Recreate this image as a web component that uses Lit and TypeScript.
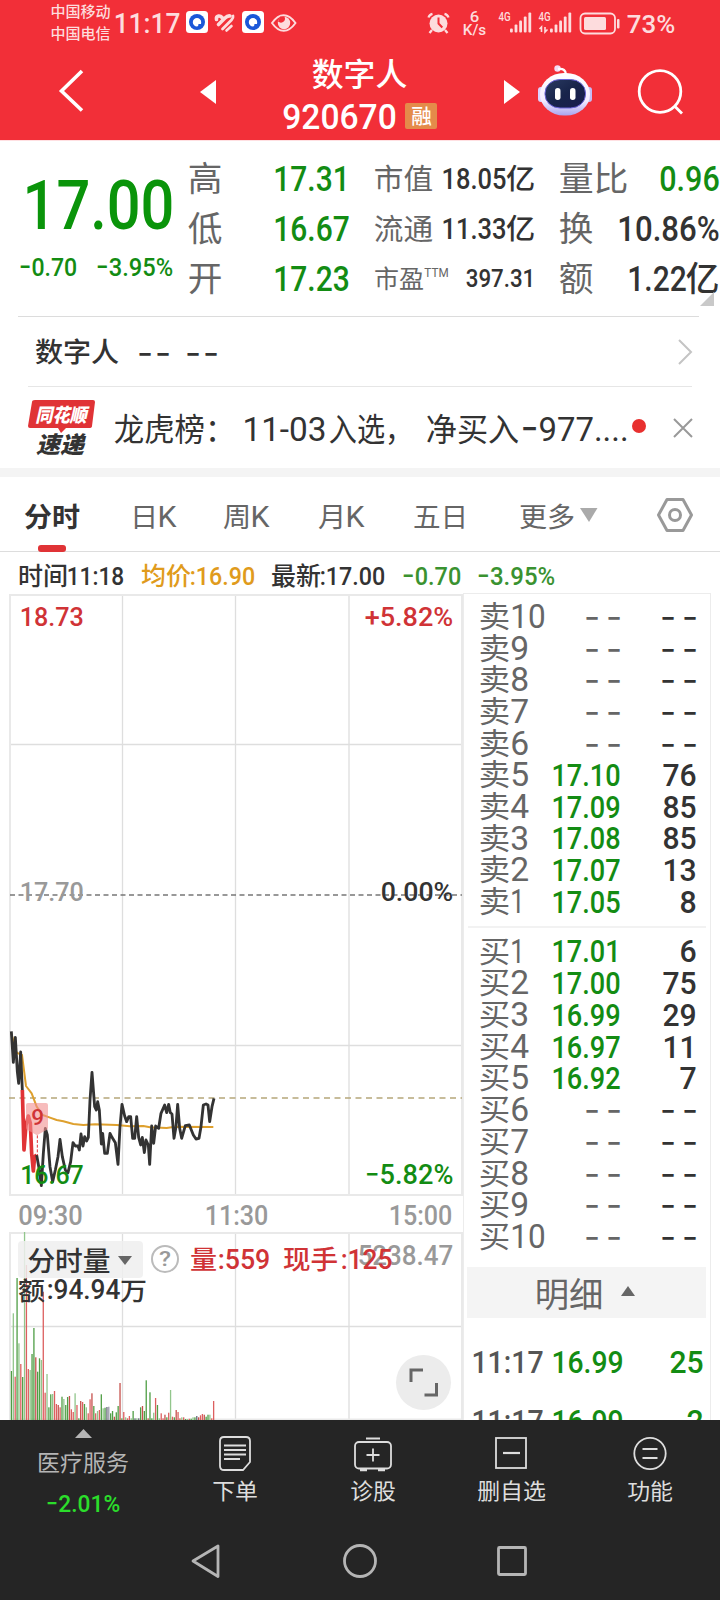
import { LitElement, html, svg, css } from "lit";
import { customElement } from "lit/decorators.js";

const numText = (text: string, x: number, y: number, w: number, cap: number, cls = "") => {
  const size = cap / 0.711;
  const b = size * 0.05;
  const body = text.startsWith("-") ? svg`<tspan class="minus">-</tspan>${text.slice(1)}` : text;
  return svg`<text class="n ${cls}" x=${x - b} y=${y} font-size=${size.toFixed(2)} textLength=${(w + 2 * b).toFixed(1)} lengthAdjust="spacingAndGlyphs">${body}</text>`;
};

/** Digits set so that `cap` is the height of the figures and `w` their inked width. */
const num = (text: string, w: number, cap: number, cls = "") =>
  html`<svg class="fit ${cls}" width=${w} height=${cap}>${numText(text, 0, cap, w, cap)}</svg>`;

/** Chinese text: `size` is the em square, `w` the inked width. */
const zhText = (text: string, x: number, y: number, w: number, size: number, cls = "") =>
  svg`<text class="z ${cls}" x=${x - size * 0.04} y=${y} font-size=${size} textLength=${(w + size * 0.08).toFixed(1)} lengthAdjust="spacingAndGlyphs">${text}</text>`;

const zh = (text: string, w: number, size: number, cls = "") =>
  html`<svg class="fit ${cls}" width=${w} height=${size}>${zhText(text, 0, size * 0.88, w, size)}</svg>`;

/** Placeholder for a missing value. */
const dashes = (w: number, cls = "") =>
  html`<svg class=${cls} width=${w} height="20"><text class="dash" x="-2" y="22.500" font-size="35" textLength=${w + 5} lengthAdjust="spacing">--</text></svg>`;

const shared = css`
  :host { display: block; }
  * { box-sizing: border-box; }
  svg { display: block; flex: none; overflow: visible; fill: currentColor; }
  .n { font-family: Roboto, "Noto Sans CJK SC", sans-serif; font-weight: 500; }
  .z { font-family: "Noto Sans CJK SC", sans-serif; font-weight: 400; }
  .dash { font-family: Inter, sans-serif; font-weight: 400; }
  .minus { font-family: Inter, sans-serif; font-size: 1.2em; font-weight: 400; }
  .bold .z { font-weight: 700; }
  .med .z { font-weight: 500; }
  .light .n { font-weight: 400; }
  .green { color: #138c13; }
  .grey { color: #666; }
  .dark { color: #333; }
  .ln { fill: none; stroke: currentColor; }
  .row { display: flex; align-items: center; }
`;

@customElement("status-bar")
class StatusBar extends LitElement {
  static styles = [shared, css`
    .row { height: 46px; padding-left: 51px; color: #fddcdd; }
    .carriers { display: grid; gap: 7px; width: 64px; padding-bottom: 1px; }
    .time { width: 71px; }
    .w { fill: #fff; } .b { fill: #1b57d8; } .bg { fill: #f22f38; }
    .status { font-weight: 500; }
  `];
  render() {
    const app = (x: number) => svg`<rect class="w" x=${x} y="11" width="22" height="22" rx="3.5"/><circle class="b" cx=${x + 11} cy="22" r="8"/><path class="w" d="M${x + 11} 26.5a4.2 4.2 0 1 1 4.2-4.2l-.2 1.7h-2.5l-.4 2z"/>`;
    const bars = (x: number) => [0, 1, 2, 3, 4].map(i => svg`<rect x=${x + i * 4.6} y=${28.5 - i * 4} width="2.8" height=${4 + i * 4} rx="1"/>`);
    return html`<div class="row">
      <div class="carriers med">${zh("中国移动", 59, 14.6)}${zh("中国电信", 59, 14.6)}</div>
      <div class="time">${num("11:17", 64, 19)}</div>
      <svg width="120" height="46" viewBox="186 0 120 46">
        ${app(186)}${app(242)}
        <g class="ln" stroke-width="3.600" stroke-linecap="round"><path d="M216.500 19.500q-.5-3 2-3.500 2-.3 3.500 1.500M218.500 24.500l6.500-6.500q2.500-2.500 5-2"/><path d="M222.500 29l9-9q2-2 1.500-4" stroke-width="2.800"/><path d="M226.500 30.500l5-4.500" stroke-width="2.600"/></g>
        <path class="ln" stroke-width="1.900" d="M272 23q5.500-7.800 11.700-7.800T295.500 23q-5.500 7.800-11.800 7.800T272 23z"/>
        <circle cx="284" cy="23" r="6.200"/><path class="bg" d="M280 16.500h4.500q1.500 3.500-1.500 5.500-2.500 1.500-5-.5z"/>
      </svg>
      <svg width="298" height="46" viewBox="306 0 298 46">
        <circle cx="438.500" cy="23.500" r="9"/>
        <path class="ln" stroke-width="2.300" d="M428.500 17.500q1-3 4-3.700M448.500 17.500q-1-3-4-3.700M432 30l-2.500 3M445 30l2.500 3"/>
        <path fill="none" stroke="#f22f38" stroke-width="2" d="M438.500 17.500v6l3.800 4"/>
        ${numText("6", 470.5, 21.5, 8, 11)}${numText("K/s", 463.5, 34.5, 22, 11)}
        ${numText("4G", 499, 21, 11, 8.5)}${bars(510)}
        ${numText("4G", 539, 21, 11, 8.5)}${bars(550)}
        <path d="M541.500 32v-5l-2 2M545 27v5l2.500-2.500" class="ln" stroke-width="1.600"/>
        <rect class="ln" stroke-width="1.800" x="580.500" y="13.500" width="34.500" height="20" rx="4.500"/>
        <rect x="584" y="17" width="22" height="13" rx="1.500"/><rect x="617" y="19" width="2.500" height="9.500" rx="1"/>
      </svg>
      <svg width="70" height="46" viewBox="604 0 70 46">${numText("73%", 628, 32.5, 46, 18)}</svg>
    </div>`;
  }
}

@customElement("title-bar")
class TitleBar extends LitElement {
  static styles = [shared, css`
    .bar { display: grid; grid-template-columns: 200px 84px 154px 66px 34px 100px 82px; height: 94px; color: #fff; }
    .mid { padding-top: 12px; display: grid; align-content: start; gap: 12px; }
    .name { padding-left: 29px; height: 33px; }
    .code { display: flex; align-items: center; gap: 9px; }
    .badge { display: grid; place-items: center; width: 32px; height: 26px; background: #e48b4a; border-radius: 2px; margin-left: 1px; }
  `];
  render() {
    return html`<div class="bar">
      <svg width="200" height="94" viewBox="0 46 200 94"><path class="ln" stroke-width="3.600" d="M82 71L61.500 91 82 110.500"/></svg>
      <svg width="84" height="94" viewBox="200 46 84 94"><path d="M200 92l16-12v24z"/></svg>
      <div class="mid">
        <div class="name med">${zh("数字人", 93, 31.5)}</div>
        <div class="code">${num("920670", 111, 25)}<span class="badge med">${zh("融", 19, 20)}</span></div>
      </div>
      <svg width="66" height="94" viewBox="438 46 66 94"></svg>
      <svg width="34" height="94" viewBox="504 46 34 94"><path d="M520 92l-16-12v24z"/></svg>
      <svg width="100" height="94" viewBox="538 46 100 94">
        <defs>
          <linearGradient id="head" x1="0" y1="0" x2="0" y2="1"><stop offset="0" stop-color="#fff"/><stop offset=".65" stop-color="#f4ecff"/><stop offset="1" stop-color="#a9a4ef"/></linearGradient>
          <linearGradient id="face" x1="0" y1="0" x2="1" y2="1"><stop offset="0" stop-color="#2a3a62"/><stop offset=".5" stop-color="#18244a"/><stop offset="1" stop-color="#1a1c50"/></linearGradient>
        </defs>
        <circle cx="557.500" cy="68.500" r="3.200" fill="#f4dcf4"/><path d="M558 69q8-1 8 6" class="ln" stroke="#f4dcf4" stroke-width="2.400"/>
        <rect x="538" y="87" width="6" height="15" rx="3" fill="#dcd2ff"/><rect x="586" y="87" width="6" height="15" rx="3" fill="#c5bdf6"/>
        <rect x="540" y="73" width="50" height="42.500" rx="24" ry="21" fill="url(#head)"/>
        <rect x="545" y="79.500" width="40.500" height="28.500" rx="15" ry="13.500" fill="url(#face)" stroke="#6a62d8" stroke-width="1"/>
        <rect x="555" y="88" width="5.500" height="12" rx="2.700"/><rect x="570" y="88" width="5.500" height="12" rx="2.700"/>
      </svg>
      <svg width="82" height="94" viewBox="638 46 82 94"><g class="ln" stroke-width="2.800"><circle cx="660" cy="91.500" r="20.800"/><path d="M674.500 106l7.500 7.500"/></g></svg>
    </div>`;
  }
}

@customElement("quote-panel")
class QuotePanel extends LitElement {
  static styles = [shared, css`
    .panel { display: grid; grid-template-columns: 169px 159px 159px 158px; height: 176px; padding: 12px 0 0 20px; border-top: 1px solid #ffe0e2; position: relative; }
    .price { padding: 27px 0 0 6px; color: #0a940a; }
    .chg { display: flex; gap: 21px; padding-top: 29px; margin-left: -6px; color: #138c13; }
    .col { display: grid; grid-template-rows: repeat(3, 50px); align-content: start; }
    .two { margin-left: 27px; margin-right: -27px; }
    .three { margin-left: 53px; margin-right: -53px; }
    .cell { display: flex; align-items: center; justify-content: space-between; }
    .pair { display: flex; align-items: center; gap: 2px; }
    .pe { display: flex; gap: 2px; }
    .pe .ttm { margin-top: 2px; }
    .corner { position: absolute; left: 700px; top: 151px; color: #c9c9c9; }
    .line { height: 1px; margin: 0 21px 0 18px; background: #dcdcdc; }
  `];
  render() {
    const cell = (l: unknown, v: unknown) => html`<div class="cell"><span class="grey">${l}</span>${v}</div>`;
    return html`<div class="panel">
      <div class="price">${num("17.00", 145, 49)}
        <div class="chg">${num("-0.70", 56, 18)}${num("-3.95%", 75, 18)}</div></div>
      <div class="col">
        ${cell(zh("高", 32, 34), num("17.31", 73, 25, "green"))}
        ${cell(zh("低", 32, 34), num("16.67", 73, 25, "green"))}
        ${cell(zh("开", 32, 34), num("17.23", 73, 25, "green"))}
      </div>
      <div class="col two">
        ${cell(zh("市值", 57, 29), html`<span class="pair dark med">${num("18.05", 62, 21)}${zh("亿", 27, 28)}</span>`)}
        ${cell(zh("流通", 57, 29), html`<span class="pair dark med">${num("11.33", 62, 21)}${zh("亿", 27, 28)}</span>`)}
        ${cell(html`<span class="pe light">${zh("市盈", 48, 25)}${num("TTM", 23, 9, "ttm")}</span>`, num("397.31", 67, 18, "dark"))}
      </div>
      <div class="col three">
        ${cell(zh("量比", 67, 34), num("0.96", 57, 25, "green"))}
        ${cell(zh("换", 32, 34), num("10.86%", 99, 25, "dark"))}
        ${cell(zh("额", 32, 34), html`<span class="pair dark med">${num("1.22", 56, 25)}${zh("亿", 31, 34)}</span>`)}
      </div>
      <svg class="corner" width="14" height="14"><path d="M14 0v14H0z"/></svg>
    </div><div class="line"></div>`;
  }
}

@customElement("news-section")
class NewsSection extends LitElement {
  static styles = [shared, css`
    .r1 { height: 69px; padding: 0 28px 0 36px; color: #333; }
    .d { margin-left: 21px; display: flex; gap: 19px; }
    .go { margin-left: auto; color: #c4c4c4; }
    .r2 { height: 82px; margin: 0 28px; border-top: 1px solid #e6e6e6; color: #333; }
    .txt { display: flex; align-items: center; margin-left: 20px; width: 517px; padding-top: 3px; }
    .a { margin-left: 10px; } .b { margin-left: 5px; } .c { margin-left: 15px; } .e { margin-left: 4px; }
    .dot { width: 14px; height: 14px; border-radius: 50%; background: #e8302f; margin-top: -3px; }
    .x { margin-left: auto; color: #999; }
    .band { height: 9px; background: #f4f4f4; }
    .logo .z { font-weight: 900; font-style: italic; }
  `];
  render() {
    return html`<div class="row r1 med">${zh("数字人", 82, 27.5)}
        <span class="d">${dashes(29)}${dashes(29)}</span>
        <svg class="go" width="14" height="26"><path class="ln" stroke-width="2" d="M1 1l12 12L1 25"/></svg></div>
      <div class="row r2">
        <svg class="logo" width="67" height="55" viewBox="28 400 67 55">
          <path fill="#e03336" d="M35 400h58q2 0 2 2l-3 24q0 2-3 2H66l-5 5-3-5H30q-2 0-2-2l4-24q0-2 3-2z"/>
          <g fill="#fff">${zhText("同花顺", 36, 421.5, 50, 19)}</g><g fill="#333">${zhText("速递", 37, 452.5, 46, 23)}</g>
        </svg>
        <div class="txt light">${zh("龙虎榜：", 119, 32)}<span class="a">${num("11-03", 81, 23)}</span><span class="b">${zh("入选，", 82, 32)}</span><span class="c">${zh("净买入", 91, 32)}</span><span class="e">${num("-977....", 105, 23)}</span></div>
        <span class="dot"></span>
        <svg class="x" width="18" height="18"><path class="ln" stroke-width="2" d="M0 0l18 18M18 0L0 18"/></svg>
      </div><div class="band"></div>`;
  }
}

@customElement("chart-tabs")
class ChartTabs extends LitElement {
  static styles = [shared, css`
    .tabs { display: grid; grid-template-columns: 106px 93px 95px 95px 106px 137px 38px; padding-left: 25px; height: 75px; border-bottom: 1px solid #ddd; align-items: center; color: #666; }
    .tab { display: flex; align-items: center; gap: 2px; height: 72px; padding-top: 3px; }
    .on { color: #333; flex-direction: column; align-items: flex-start; justify-content: flex-end; gap: 15px; padding: 0; height: 75px; }
    .bar { width: 28px; height: 7px; border-radius: 3px; background: #e03336; margin-left: 13px; }
    .tri { margin-left: 4px; color: #aaa; margin-top: -3px; }
    .hex { color: #999; }
    .info { height: 41px; padding: 6px 0 0 19px; color: #333; }
    .i { display: flex; align-items: center; gap: 1px; margin-right: 18.500px; }
    .amber { color: #e09b1c; } .g { color: #3a9230; }
  `];
  render() {
    const k = (t: string) => html`<div class="tab light">${zh(t, 26, 27)}${num("K", 16, 21.5)}</div>`;
    return html`<div class="tabs">
        <div class="tab on bold">${zh("分时", 54, 27.5)}<span class="bar"></span></div>
        ${k("日")}${k("周")}${k("月")}
        <div class="tab">${zh("五日", 53, 27)}</div>
        <div class="tab">${zh("更多", 54, 27)}<svg class="tri" width="18" height="14"><path d="M0 0h17.500L9 14z"/></svg></div>
        <svg class="hex" width="36" height="36"><path class="ln" stroke-width="3" stroke-linejoin="round" d="M10 2.500h16L34.500 18 26 33.500H10L1.500 18z"/><circle class="ln" stroke-width="3" cx="18" cy="18" r="5.500"/></svg>
      </div>
      <div class="row info">
        <span class="i med">${zh("时间", 48, 25)}${num("11:18", 55, 18)}</span>
        <span class="i med amber">${zh("均价", 48, 25)}${num(":16.90", 63, 18)}</span>
        <span class="i med">${zh("最新", 48, 25)}${num(":17.00", 63, 18)}</span>
        <span class="i g">${num("-0.70", 57, 18)}</span><span class="i g">${num("-3.95%", 76, 18)}</span>
      </div>`;
  }
}

/* Volume per minute: the figure is the top of the bar, the letter its direction. */
const VOLUME = "513g 340g 530r 234g 430g 492r 531g 96g 195r 507r 510g 462g 384g 472r 515g 475g 480g 275r 578r 522g 622g 583g 582g 573r 612r 615r 622r 590g 597g 615g 591g 588r 628r 636r 580g 615r 655g 603r 606r 612g 622g 640r 598r 580r 618g 640r 633g 630r 583g 625g 623g 621b 620b 640g 633g 650r 637g 618g 549r 655g 636r 652g 655r 648r 655g 633g 655b 655g 655b 622g 618r 633g 541g 655r 577g 655g 638g 594r 615g 655g 640r 655r 644r 652g 638r 570g 650r 652g 630r 636r 655r 652g 652r 657g 657g 656r 656g 652g 652g 648b 652r 646r 642r 644r 650g 644g 644g 655r 603r".split(" ");
const HUE: Record<string, string> = { g: "#4f9e45", r: "#dc5f5f", b: "#667" };
const HUE2: Record<string, string> = { g: "#92c68c", r: "#c6504c", b: "#99a" };

@customElement("minute-chart")
class MinuteChart extends LitElement {
  static styles = [shared, css`
    .grid { stroke: #dedede; stroke-width: 1.300; fill: none; }
    .edge { stroke: #e9e9e9; stroke-width: 2; fill: none; }
    .red { fill: #d03336; } .gr { fill: #138c13; } .gy { fill: #999; } .dk { fill: #333; }
    .pl { fill: none; stroke: #333; stroke-width: 8.500; stroke-linejoin: round; }
    .pr { stroke: #e03336; stroke-width: 11; } .po { stroke: #dea02e; stroke-width: 6; }
    .m .z { font-weight: 500; }
  `];
  render() {
    return html`<svg class="m" width="463" height="827" viewBox="0 593 463 827">
      <path class="grid" d="M122.500 595V1194M235.500 595V1194M349 595V1194M10 744.500H462M10 1045.500H462M122.500 1233V1420M235.500 1233V1420M349 1233V1420M10 1326.500H462"/>
      <path class="edge" d="M10 595H462V1195H10zM10 1420V1233H462V1420M10 1419.500H462"/>
      <path fill="none" stroke="#777" stroke-width="1.500" stroke-dasharray="5 3.500" d="M10 895H462"/>
      <path fill="none" stroke="#b5a77a" stroke-width="1.600" stroke-dasharray="6 4.500" d="M9 1098H462"/>
      ${numText("18.73", 21, 626, 61.5, 18.5, "red")}${numText("+5.82%", 366, 626, 86, 18.5, "red")}
      ${numText("17.70", 21, 901, 61.5, 18.5, "gy")}${numText("0.00%", 382, 901, 70, 18.5, "dk")}
      <g transform="translate(0 1010) scale(.33333)">
        <polyline class="pl po" points="34,70 50,128 66,135 78,228 95,250 110,290 128,315 150,323 170,330 190,334 220,342 250,345 285,343 350,345 390,349 430,348 450,352 500,354 525,350 640,351"/>
        <polyline class="pl" points="34,64 40,157 46,82 52,185 56,220 62,126 67,240"/>
        <polyline class="pl pr" points="67,240 72,420 78,345 85,318 91,340 95,430 100,483 104,440 110,435"/>
        <polyline class="pl" points="110,435 118,480 124,527 130,430 136,355 142,375 150,470 158,515 166,480 174,440 180,388 187,440 196,480 204,488 212,455 219,398 226,408 234,408 238,420 243,372 249,408 254,380 260,393 265,382 270,270 276,187 284,290 289,300 293,275 298,300 304,402 308,370 314,430 322,430 330,370 336,382 346,398 354,463 360,350 366,283 374,318 380,335 386,320 392,320 398,385 404,385 410,320 416,382 422,405 427,382 433,428 438,390 445,405 449,463 455,348 461,400 467,348 476,355 483,310 494,285 500,308 506,283 511,308 516,312 522,385 528,350 533,283 539,355 545,385 556,347 568,345 580,375 588,387 597,385 603,350 610,285 618,282 624,285 629,335 636,290 642,265"/>
        <path fill="#f19090" fill-opacity=".6" d="M84 279h54q6 0 6 6v68q0 6-6 8l-27 15-27-15q-6-2-6-8v-68q0-6 6-6z"/>
        <path fill="none" stroke="#fff" stroke-width="10" d="M112 376v56"/><path fill="none" stroke="#e03336" stroke-width="3" stroke-dasharray="9 5" d="M112 376v60"/>
      </g>
      ${numText("9", 32.5, 1125, 10.5, 16, "red")}
      ${numText("16.67", 21.5, 1183.5, 61, 18.5, "gr")}${numText("-5.82%", 366, 1183.5, 86, 19, "gr")}
      ${numText("09:30", 19.5, 1224.5, 62, 19, "gy")}${numText("11:30", 206, 1224.5, 61, 19, "gy")}${numText("15:00", 390, 1224.5, 61, 19, "gy")}
      ${VOLUME.map((v, i) => {
        const top = 1200 + parseInt(v) / 3;
        const k = v.slice(-1);
        return svg`<rect x=${(10.8 + i * 1.872).toFixed(2)} y=${top.toFixed(1)} width="1.300" height=${(1420 - top).toFixed(1)} fill=${(i % 3 === 1 ? HUE2 : HUE)[k]}></rect>`;
      })}
      <rect x="18" y="1241" width="125" height="37" rx="4" fill="#eee" fill-opacity=".85"/>
      ${zhText("分时量", 28.5, 1271, 81, 27.5, "dk")}<path fill="#666" d="M118 1256h14l-7 9z"/>
      <circle cx="165" cy="1259" r="13" fill="none" stroke="#bbb" stroke-width="2"/>${numText("?", 160, 1266, 10, 14, "gy")}
      ${numText("5238.47", 359, 1265, 93, 19.5, "gy")}
      ${zhText("量", 191, 1269, 25, 26, "red")}${numText(":559", 219, 1269, 50, 19.5, "red")}
      ${zhText("现手", 284, 1269, 53, 26, "red")}${numText(":125", 342, 1269, 49, 19.5, "red")}
      ${zhText("额", 19, 1299.5, 25, 25, "dk")}${numText(":94.94", 48, 1299, 71, 19.5, "dk")}${zhText("万", 121, 1299.5, 25, 25, "dk")}
      <circle cx="423.500" cy="1382.500" r="27.500" fill="#ececec"/>
      <path fill="none" stroke="#666" stroke-width="3" d="M411 1382v-12h12M424.500 1395h12v-12"/>
    </svg>`;
  }
}

const SELL = [["10"], ["9"], ["8"], ["7"], ["6"], ["5", "17.10", "76"], ["4", "17.09", "85"], ["3", "17.08", "85"], ["2", "17.07", "13"], ["1", "17.05", "8"]];
const BUY = [["1", "17.01", "6"], ["2", "17.00", "75"], ["3", "16.99", "29"], ["4", "16.97", "11"], ["5", "16.92", "7"], ["6"], ["7"], ["8"], ["9"], ["10"]];

@customElement("order-book")
class OrderBook extends LitElement {
  static styles = [shared, css`
    .book { width: 248px; height: 827px; border: 1px solid #ececec; border-bottom: 0; overflow: hidden; padding-top: 6px; }
    .lv { display: grid; grid-template-columns: 65px 74px 76px; padding-left: 16px; height: 31.700px; align-items: center; justify-items: end; }
    .lab { display: flex; align-items: center; gap: 3px; justify-self: start; }
    .sep { height: 2px; background: #f2f2f2; margin: 9px 4px 7px; }
    .detail { display: flex; align-items: center; height: 51px; margin: 15px 4px 0 3px; padding: 3px 0 0 69px; gap: 19px; background: #f4f4f4; color: #666; }
    .tri { margin-top: -6px; }
    .tr { display: grid; grid-template-columns: 70px 80px 80px; padding-left: 8px; height: 59px; align-items: center; justify-items: end; }
    .trades { padding-top: 14px; }
    .t { color: #555; }
  `];
  render() {
    const lv = (side: string) => ([n, p, q]: string[]) => html`<div class="lv">
      <span class="lab grey light">${zh(side, 29, 30)}${num(n, n.length > 1 ? 32 : n === "1" ? 11 : 15.5, 24)}</span>
      ${p ? num(p, 66, 22.5, "green") : dashes(33, "grey")}
      ${q ? num(q, q.length > 1 ? 31 : 14, 22.5, "dark") : dashes(33, "dark")}</div>`;
    return html`<div class="book">
      ${SELL.map(lv("卖"))}<div class="sep"></div>${BUY.map(lv("买"))}
      <div class="detail">${zh("明细", 66, 34)}<svg class="tri" width="14" height="10"><path d="M7 0l7 10H0z"/></svg></div>
      <div class="trades">${["25", "2"].map(q => html`<div class="tr">${num("11:17", 69, 22.5, "t")}${num("16.99", 69, 22.5, "green")}${num(q, q.length > 1 ? 31 : 14, 22.5, "green")}</div>`)}</div>
    </div>`;
  }
}

@customElement("bottom-bar")
class BottomBar extends LitElement {
  static styles = [shared, css`
    .all { height: 180px; background: #252525; color: #ddd; }
    .acts { display: grid; grid-template-columns: 166px 138px 137px 140px 138px; height: 108px; }
    .a { display: grid; justify-items: center; align-content: start; padding-top: 14px; gap: 8px; }
    .idx { gap: 0; padding-top: 9px; color: #b5b5b5; }
    .nm { margin-top: 13px; } .pc { margin-top: 21px; color: #2bdd2b; }
    .nav { color: #b5b5b5; }
  `];
  render() {
    return html`<div class="all"><div class="acts">
      <div class="a idx"><svg width="17" height="9"><path d="M8.500 0L17 9H0z"/></svg><span class="nm">${zh("医疗服务", 90, 22.5)}</span><span class="pc">${num("-2.01%", 72, 17)}</span></div>
      <div class="a"><svg width="32" height="38"><g class="ln" stroke-width="1.800"><path d="M5 3h22q4 0 4 4v21l-7 8H5q-4 0-4-4V7q0-4 4-4z"/><path d="M5 11.500h22M5 16h22M5 20.500h22M5 25h16"/></g></svg>${zh("下单", 44, 22)}</div>
      <div class="a"><svg width="38" height="38"><g class="ln" stroke-width="1.800"><rect x="1" y="8" width="36" height="26.500" rx="4"/><path d="M12 4.500h14M12.500 21h13M19 14.500v13"/><path stroke-width="2.600" d="M6 36h7M24 36h7"/></g></svg>${zh("诊股", 44, 22)}</div>
      <div class="a"><svg width="34" height="38"><g class="ln" stroke-width="1.800"><rect x="2" y="4" width="30" height="30"/><path stroke-width="2.200" d="M9 19h17"/></g></svg>${zh("删自选", 67, 22)}</div>
      <div class="a"><svg width="34" height="38"><g class="ln" stroke-width="1.800"><circle cx="17" cy="19.500" r="15.700"/><path d="M9.500 15h15M9.500 24h15"/></g></svg>${zh("功能", 44, 22)}</div>
    </div>
    <svg class="nav" width="720" height="72" viewBox="0 1528 720 72"><g class="ln" stroke-width="2.800" stroke-linejoin="round"><path d="M193 1561l25-15v30.500z"/><circle cx="360" cy="1561" r="15.500"/><rect x="498.500" y="1547.500" width="27" height="27" rx="1"/></g></svg>
    </div>`;
  }
}

@customElement("app-root")
class AppRoot extends LitElement {
  static styles = css`
    :host { display: block; width: 720px; height: 1600px; overflow: hidden; background: #fff; font-family: Roboto, "Noto Sans CJK SC", sans-serif; }
    .head { height: 140px; background: #f22f38; }
    .main { display: flex; height: 827px; overflow: hidden; }
  `;
  render() {
    return html`<div class="head"><status-bar></status-bar><title-bar></title-bar></div>
      <quote-panel></quote-panel><news-section></news-section><chart-tabs></chart-tabs>
      <div class="main"><minute-chart></minute-chart><order-book></order-book></div>
      <bottom-bar></bottom-bar>`;
  }
}
